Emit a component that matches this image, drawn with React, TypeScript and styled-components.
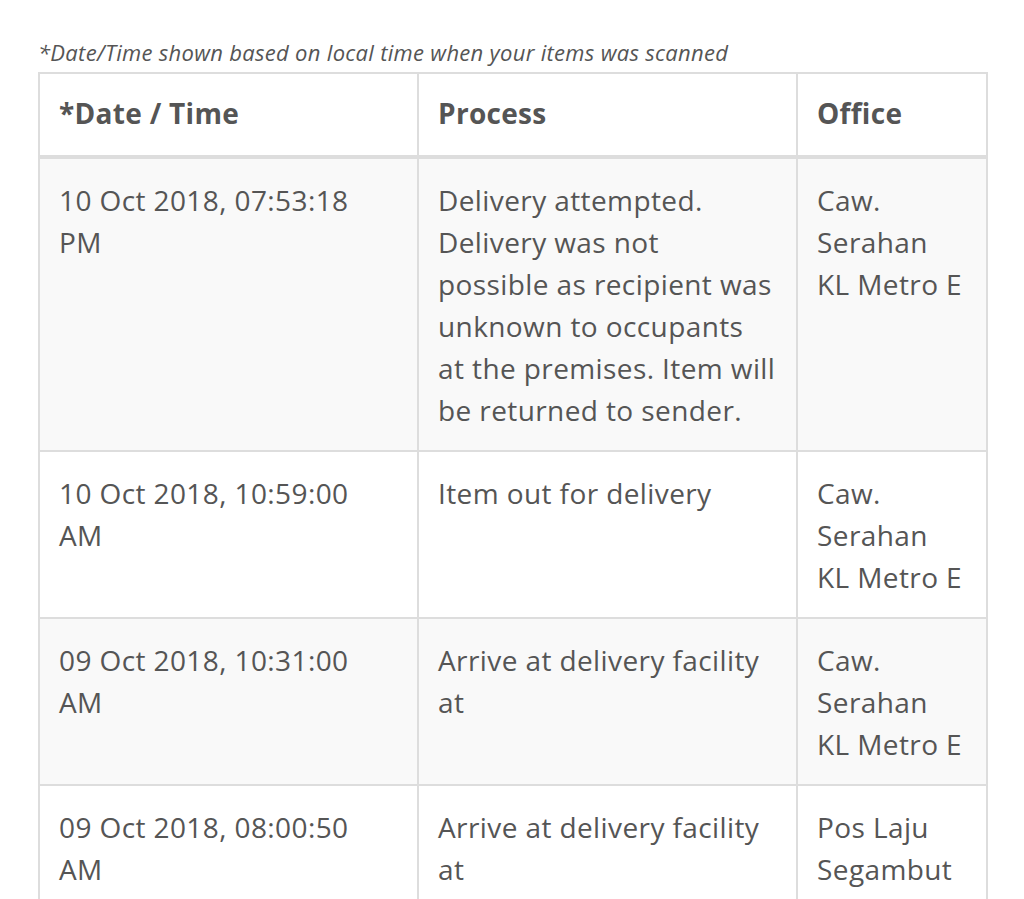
import React from 'react';
import styled, { createGlobalStyle } from 'styled-components';

const GlobalStyle = createGlobalStyle`
  html, body {
    margin: 0;
    padding: 0;
    background: #fff;
  }
  body {
    font-family: 'Open Sans', 'Noto Sans', sans-serif;
    color: #555;
  }
`;

const Page = styled.div`
  padding: 38px 38px 0 38px;
  width: 948px;
`;

const Note = styled.p`
  margin: 0 0 6px 0;
  font-size: 22px;
  line-height: 28px;
  letter-spacing: 0.3px;
  font-style: italic;
  color: #555;
`;

const Table = styled.table`
  width: 948px;
  border-collapse: collapse;
  table-layout: fixed;
  border: 2px solid #ddd;
`;

const HeadCell = styled.th<{ $w: number }>`
  box-sizing: border-box;
  width: ${(p) => p.$w}px;
  text-align: left;
  font-weight: 700;
  font-size: 28px;
  line-height: 42px;
  letter-spacing: 0.3px;
  padding: 18px 19px 21px 19px;
  border: 2px solid #ddd;
  border-bottom-width: 4px;
  vertical-align: middle;
`;

const Row = styled.tr<{ $striped: boolean }>`
  background: ${(p) => (p.$striped ? '#f9f9f9' : '#fff')};
`;

const Cell = styled.td`
  font-size: 28px;
  line-height: 42px;
  letter-spacing: 0.4px;
  padding: 20px 19px 19px 19px;
  border: 2px solid #ddd;
  vertical-align: top;
  white-space: nowrap;
`;

type Entry = { date: string[]; process: string[]; office: string[] };

const entries: Entry[] = [
  {
    date: ['10 Oct 2018, 07:53:18', 'PM'],
    process: [
      'Delivery attempted.',
      'Delivery was not',
      'possible as recipient was',
      'unknown to occupants',
      'at the premises. Item will',
      'be returned to sender.',
    ],
    office: ['Caw.', 'Serahan', 'KL Metro E'],
  },
  {
    date: ['10 Oct 2018, 10:59:00', 'AM'],
    process: ['Item out for delivery'],
    office: ['Caw.', 'Serahan', 'KL Metro E'],
  },
  {
    date: ['09 Oct 2018, 10:31:00', 'AM'],
    process: ['Arrive at delivery facility', 'at'],
    office: ['Caw.', 'Serahan', 'KL Metro E'],
  },
  {
    date: ['09 Oct 2018, 08:00:50', 'AM'],
    process: ['Arrive at delivery facility', 'at'],
    office: ['Pos Laju', 'Segambut'],
  },
];

const Lines = ({ lines }: { lines: string[] }) => (
  <>
    {lines.map((l, i) => (
      <React.Fragment key={i}>
        {i > 0 && <br />}
        {l}
      </React.Fragment>
    ))}
  </>
);

const App = () => (
  <Page>
    <GlobalStyle />
    <Note>*Date/Time shown based on local time when your items was scanned</Note>
    <Table>
      <thead>
        <tr>
          <HeadCell $w={379}>*Date / Time</HeadCell>
          <HeadCell $w={379}>Process</HeadCell>
          <HeadCell $w={190}>Office</HeadCell>
        </tr>
      </thead>
      <tbody>
        {entries.map((e, i) => (
          <Row key={i} $striped={i % 2 === 0}>
            <Cell>
              <Lines lines={e.date} />
            </Cell>
            <Cell>
              <Lines lines={e.process} />
            </Cell>
            <Cell>
              <Lines lines={e.office} />
            </Cell>
          </Row>
        ))}
      </tbody>
    </Table>
  </Page>
);

export default App;
